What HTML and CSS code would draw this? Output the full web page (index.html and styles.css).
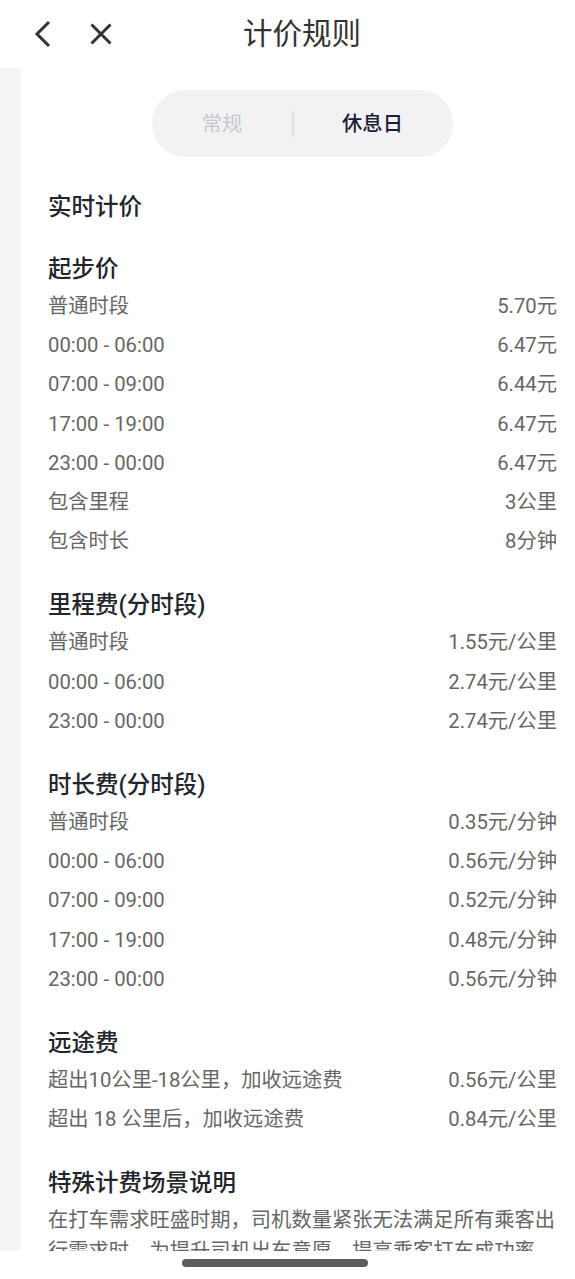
FILE: index.html
```html
<!DOCTYPE html>
<html lang="zh-CN">
<head>
<meta charset="utf-8">
<title>计价规则</title>
<link rel="stylesheet" href="styles.css">
</head>
<body>
<div class="screen">
  <header class="topbar">
    <svg class="icon-back" width="20" height="28" viewBox="0 0 20 28"><path d="M16 2 L4 14 L16 26" fill="none" stroke="#333" stroke-width="3"/></svg>
    <svg class="icon-close" width="24" height="24" viewBox="0 0 24 24"><path d="M2.5 2.5 L21.5 21.5 M21.5 2.5 L2.5 21.5" fill="none" stroke="#333" stroke-width="3"/></svg>
    <h1 class="title">计价规则</h1>
  </header>
  <div class="scroll">
    <main class="panel">
      <div class="tabs-wrap">
        <div class="tabs">
          <div class="tab tab-off">常规</div>
          <div class="tab tab-on"><span class="divider"></span>休息日</div>
        </div>
      </div>
      <div class="page-title">实时计价</div>

      <section class="section">
        <div class="sec-title">起步价</div>
        <div class="row"><span>普通时段</span><span>5.70元</span></div>
        <div class="row"><span>00:00 - 06:00</span><span>6.47元</span></div>
        <div class="row"><span>07:00 - 09:00</span><span>6.44元</span></div>
        <div class="row"><span>17:00 - 19:00</span><span>6.47元</span></div>
        <div class="row"><span>23:00 - 00:00</span><span>6.47元</span></div>
        <div class="row"><span>包含里程</span><span>3公里</span></div>
        <div class="row"><span>包含时长</span><span>8分钟</span></div>
      </section>

      <section class="section">
        <div class="sec-title">里程费(分时段)</div>
        <div class="row"><span>普通时段</span><span>1.55元/公里</span></div>
        <div class="row"><span>00:00 - 06:00</span><span>2.74元/公里</span></div>
        <div class="row"><span>23:00 - 00:00</span><span>2.74元/公里</span></div>
      </section>

      <section class="section">
        <div class="sec-title">时长费(分时段)</div>
        <div class="row"><span>普通时段</span><span>0.35元/分钟</span></div>
        <div class="row"><span>00:00 - 06:00</span><span>0.56元/分钟</span></div>
        <div class="row"><span>07:00 - 09:00</span><span>0.52元/分钟</span></div>
        <div class="row"><span>17:00 - 19:00</span><span>0.48元/分钟</span></div>
        <div class="row"><span>23:00 - 00:00</span><span>0.56元/分钟</span></div>
      </section>

      <section class="section">
        <div class="sec-title">远途费</div>
        <div class="row"><span>超出10公里-18公里，加收远途费</span><span>0.56元/公里</span></div>
        <div class="row"><span>超出 18 公里后，加收远途费</span><span>0.84元/公里</span></div>
      </section>

      <section class="section">
        <div class="sec-title">特殊计费场景说明</div>
        <p class="desc">在打车需求旺盛时期，司机数量紧张无法满足所有乘客出行需求时，为提升司机出车意愿，提高乘客打车成功率，平台可能会对订单加收一定的费用。</p>
      </section>
    </main>
  </div>
  <footer class="home">
    <div class="home-bar"></div>
  </footer>
</div>
</body>
</html>
```

FILE: styles.css
```css
* { box-sizing: border-box; }
html, body {
  margin: 0;
  padding: 0;
  background: #ffffff;
}
body {
  font-family: Roboto, "Noto Sans CJK SC", "Noto Sans", sans-serif;
  color: #666666;
}
.screen {
  width: 575px;
  height: 1279px;
  overflow: hidden;
  display: flex;
  flex-direction: column;
}
.topbar {
  height: 68px;
  flex: none;
  display: flex;
  align-items: center;
  padding-left: 33px;
}
.icon-back { display: block; flex: none; }
.icon-close { display: block; flex: none; margin-left: 36px; }
.title {
  margin: 0 0 0 130px;
  font-size: 29.5px;
  font-weight: 400;
  color: #333333;
  line-height: 36px;
}
.scroll {
  height: 1183px;
  flex: none;
  background: #f5f5f5;
  overflow: hidden;
  display: flex;
}
.panel {
  flex: 1;
  margin-left: 21px;
  background: #ffffff;
  padding: 22px 18px 0 27px;
}
.tabs-wrap {
  display: flex;
  justify-content: center;
}
.tabs {
  width: 301px;
  height: 67px;
  border-radius: 34px;
  background: #f2f2f4;
  display: flex;
  align-items: center;
  font-size: 20.3px;
}
.tab {
  height: 100%;
  display: flex;
  align-items: center;
  justify-content: center;
  position: relative;
  padding-bottom: 4px;
}
.tab-off {
  width: 140px;
  color: #c6c8cd;
}
.tab-on {
  flex: 1;
  color: #1a2033;
  font-weight: 500;
}
.divider {
  position: absolute;
  left: 0;
  top: 21px;
  width: 1.5px;
  height: 26px;
  background: #dedfe2;
}
.page-title {
  margin-top: 32px;
  font-size: 23.5px;
  line-height: 36px;
  font-weight: 500;
  color: #22252c;
}
.section { margin-top: 26px; }
.sec-title {
  font-size: 23.5px;
  line-height: 36px;
  font-weight: 500;
  color: #22252c;
}
.row {
  display: flex;
  justify-content: space-between;
  font-size: 20.3px;
  line-height: 39.2px;
  color: #666666;
}
.desc {
  margin: 4px 0 0 0;
  font-size: 20.3px;
  line-height: 31px;
  color: #666666;
}
.home {
  flex: 1;
  padding-top: 8px;
}
.home-bar {
  margin-left: 182px;
  width: 186px;
  height: 8px;
  border-radius: 4px;
  background: #5c5c5c;
}
```
